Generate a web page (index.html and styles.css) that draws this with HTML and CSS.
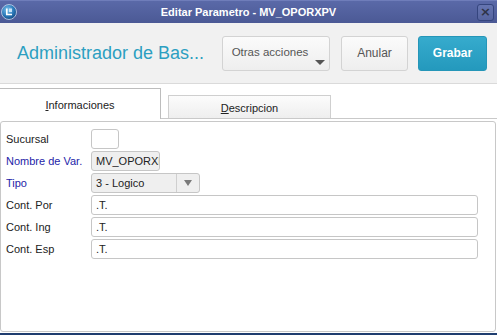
FILE: index.html
```html
<!DOCTYPE html>
<html lang="es">
<head>
    <meta charset="UTF-8">
    <meta name="viewport" content="width=device-width, initial-scale=1.0">
    <title>Editar Parametro - MV_OPORXPV</title>
    <link rel="stylesheet" href="styles.css">
</head>
<body>
    <div class="window">
        <div class="titlebar">
            <svg class="app-icon" width="16" height="16" viewBox="0 0 16 16">
                <defs>
                    <radialGradient id="orb" cx="40%" cy="35%" r="70%">
                        <stop offset="0" stop-color="#7fc4ee"/>
                        <stop offset="0.6" stop-color="#2a78b8"/>
                        <stop offset="1" stop-color="#15477e"/>
                    </radialGradient>
                </defs>
                <circle cx="8" cy="8" r="7.5" fill="url(#orb)" stroke="#c9d6ec" stroke-width="0.8"/>
                <path d="M5 4.5 h1.6 v5.2 h4.4 v1.6 h-6 z" fill="#ffffff"/>
                <path d="M8 4.5 h3 v3.6 h-3 z" fill="#dbeeff" opacity="0.85"/>
            </svg>
            <span class="window-title">Editar Parametro - MV_OPORXPV</span>
            <button class="close-button">&times;</button>
        </div>

        <header class="header">
            <h1 class="header-title">Administrador de Bas...</h1>
            <div class="actions">
                <button class="btn btn-more">Otras acciones<span class="caret"></span></button>
                <button class="btn btn-cancel">Anular</button>
                <button class="btn btn-save">Grabar</button>
            </div>
        </header>

        <div class="tabs">
            <div class="tab tab-active"><u>I</u>nformaciones</div>
            <div class="tab"><u>D</u>escripcion</div>
        </div>

        <div class="panel">
            <div class="form">
                <label class="field-label">Sucursal</label>
                <input class="field field-branch" type="text" value="">

                <label class="field-label required">Nombre de Var.</label>
                <input class="field field-name" type="text" value="MV_OPORXPV" readonly>

                <label class="field-label required">Tipo</label>
                <div class="field field-select">
                    <span class="select-value">3 - Logico</span>
                    <span class="select-arrow"></span>
                </div>

                <label class="field-label">Cont. Por</label>
                <input class="field" type="text" value=".T.">

                <label class="field-label">Cont. Ing</label>
                <input class="field" type="text" value=".T.">

                <label class="field-label">Cont. Esp</label>
                <input class="field" type="text" value=".T.">
            </div>
        </div>

        <div class="statusbar"></div>
    </div>
</body>
</html>
```

FILE: styles.css
```css
body {
    margin: 0;
    padding: 0;
    font-family: "Liberation Sans", Arial, sans-serif;
    font-size: 11px;
    color: #222;
    background: #ffffff;
}
.window {
    width: 497px;
    height: 335px;
    display: flex;
    flex-direction: column;
    overflow: hidden;
}
.titlebar {
    height: 23px;
    display: grid;
    grid-template-columns: 1fr auto 1fr;
    align-items: center;
    background: linear-gradient(to bottom, #5a69a8, #4b5995);
    border-top: 1px solid #6f7dba;
    box-sizing: border-box;
}
.app-icon {
    margin-left: 1px;
}
.window-title {
    color: #ffffff;
    font-weight: bold;
    font-size: 11px;
}
.close-button {
    justify-self: end;
    width: 17px;
    height: 17px;
    margin-right: 3px;
    padding: 0;
    border: 1px solid #35457e;
    border-radius: 3px;
    background: linear-gradient(to bottom, #6675b1, #56649f);
    color: #2e3347;
    font-size: 13px;
    font-weight: bold;
    line-height: 14px;
    font-family: "DejaVu Sans", sans-serif;
}
.header {
    height: 60px;
    display: flex;
    align-items: center;
    padding: 0 10px 0 17px;
    background: #f1f1f1;
    border-bottom: 1px solid #dadada;
}
.header-title {
    flex-grow: 1;
    margin: 0;
    font-size: 18px;
    font-weight: normal;
    color: #2c9fc1;
}
.actions {
    display: flex;
    gap: 10px;
}
.btn {
    height: 35px;
    padding: 0;
    border: 1px solid #d3d3d3;
    border-radius: 3px;
    background: linear-gradient(to bottom, #fbfbfb, #eeeeee);
    color: #555555;
    font-family: "Liberation Sans", Arial, sans-serif;
    font-size: 12px;
}
.btn-more {
    position: relative;
    width: 108px;
    margin-right: 1px;
    padding: 0 12px 2px 0;
    font-size: 11.5px;
}
.caret {
    position: absolute;
    right: 4px;
    bottom: 5px;
    width: 0;
    height: 0;
    border-left: 5px solid transparent;
    border-right: 5px solid transparent;
    border-top: 5px solid #555555;
}
.btn-cancel {
    width: 67px;
}
.btn-save {
    width: 69px;
    border-color: #2596b8;
    background: linear-gradient(to bottom, #36abcd, #2499bd);
    color: #ffffff;
    font-weight: bold;
    font-size: 12px;
}
.tabs {
    height: 35px;
    box-sizing: border-box;
    display: flex;
    align-items: flex-end;
    border-bottom: 1px solid #c9c9c9;
}
.tab {
    height: 23px;
    width: 163px;
    margin-left: 7px;
    box-sizing: border-box;
    border: 1px solid #cfcfcf;
    border-bottom: none;
    background: linear-gradient(to bottom, #fcfcfc, #eeeeee);
    text-align: center;
    line-height: 24px;
}
.tab-active {
    height: 31px;
    width: 161px;
    margin-left: 0;
    margin-bottom: -1px;
    border-color: #bdbdbd;
    border-left: none;
    background: #ffffff;
    line-height: 32px;
}
.panel {
    flex-grow: 1;
    margin: 2px 1px 1px 0;
    padding: 7px 17px 0 5px;
    border: 1px solid #c8c8c8;
    border-radius: 3px;
}
.form {
    display: grid;
    grid-template-columns: 85px 1fr;
    grid-auto-rows: 20px;
    row-gap: 2px;
    align-items: center;
}
.field-label {
    color: #222;
}
.field-label.required {
    color: #2424a8;
}
.field {
    height: 20px;
    box-sizing: border-box;
    margin: 0;
    padding: 0 4px;
    border: 1px solid #c6c6c6;
    border-radius: 3px;
    background: #ffffff;
    font-family: "Liberation Sans", Arial, sans-serif;
    font-size: 11px;
    color: #222;
    outline: none;
}
.field-branch {
    width: 28px;
}
.field-name {
    width: 69px;
    padding-right: 0;
    background: #efefef;
}
.field-select {
    width: 109px;
    display: flex;
    align-items: center;
    padding: 0;
    background: #efefef;
}
.select-value {
    flex-grow: 1;
    padding-left: 4px;
}
.select-arrow {
    width: 22px;
    height: 18px;
    border-left: 1px solid #cfcfcf;
    display: flex;
    align-items: center;
    justify-content: center;
}
.select-arrow::after {
    content: "";
    width: 0;
    height: 0;
    border-left: 4px solid transparent;
    border-right: 4px solid transparent;
    border-top: 6px solid #7a7a7a;
}
.statusbar {
    height: 2px;
    background: #1f3d6f;
}
```
